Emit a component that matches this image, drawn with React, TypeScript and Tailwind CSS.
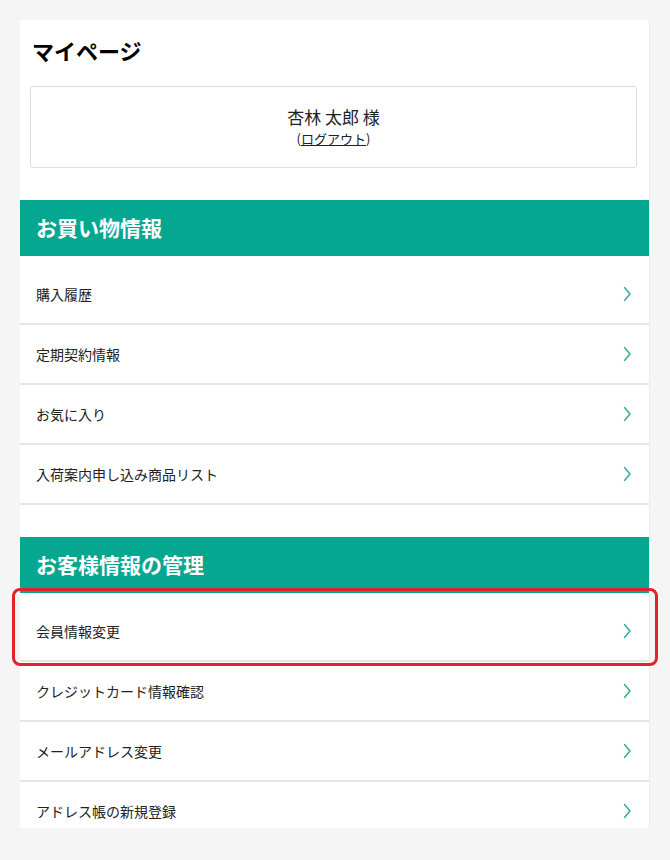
import React from "react";

const Chevron = () => (
  <svg width="10" height="16" viewBox="0 0 10 16" fill="none" className="shrink-0">
    <polyline points="2.5,1.5 8,8 2.5,14.5" stroke="#3aa99a" strokeWidth="1.5" strokeLinecap="round" strokeLinejoin="round" />
  </svg>
);

const Row = ({ label }: { label: string }) => (
  <li className="flex h-[60px] items-center justify-between border-b-2 border-[#e6e6e6] pl-4 pr-[17px] text-[14px] text-[#222]">
    <span>{label}</span>
    <Chevron />
  </li>
);

const Header = ({ title }: { title: string }) => (
  <div className="flex h-[56px] items-center bg-[#06a791] pl-4 text-[21px] font-bold text-white">{title}</div>
);

export default function App() {
  const font = { fontFamily: '"Noto Sans CJK JP", "Noto Sans", sans-serif' };
  return (
    <div className="relative min-h-[860px] bg-[#f5f5f5] pl-5 pr-[21px] pt-5" style={font}>
      <div className="h-[808px] overflow-hidden bg-white shadow-[1px_0_0_#ececec]">
        <div className="pl-[10px] pr-[12px]">
          <h1 className="pl-[2px] pt-[16px] text-[22px] font-bold leading-[28px] text-black">マイページ</h1>
          <div className="mt-[22px] flex h-[82px] flex-col items-center justify-center rounded-[3px] border border-[#dcdcdc]">
            <div className="text-[17px] leading-[24px] text-[#222]">杏林 太郎 様</div>
            <div className="text-[13px] leading-[20px] text-[#222]">
              (<span className="underline">ログアウト</span>)
            </div>
          </div>
        </div>
        <div className="mt-[32px]">
          <Header title="お買い物情報" />
          <ul className="mt-[9px]">
            <Row label="購入履歴" />
            <Row label="定期契約情報" />
            <Row label="お気に入り" />
            <Row label="入荷案内申し込み商品リスト" />
          </ul>
        </div>
        <div className="mt-[32px]">
          <Header title="お客様情報の管理" />
          <ul className="mt-[9px]">
            <Row label="会員情報変更" />
            <Row label="クレジットカード情報確認" />
            <Row label="メールアドレス変更" />
            <Row label="アドレス帳の新規登録" />
          </ul>
        </div>
      </div>
      <div className="pointer-events-none absolute left-[12px] top-[588px] h-[78px] w-[646px] rounded-[8px] border-[3px] border-[#e3222b]" />
    </div>
  );
}
